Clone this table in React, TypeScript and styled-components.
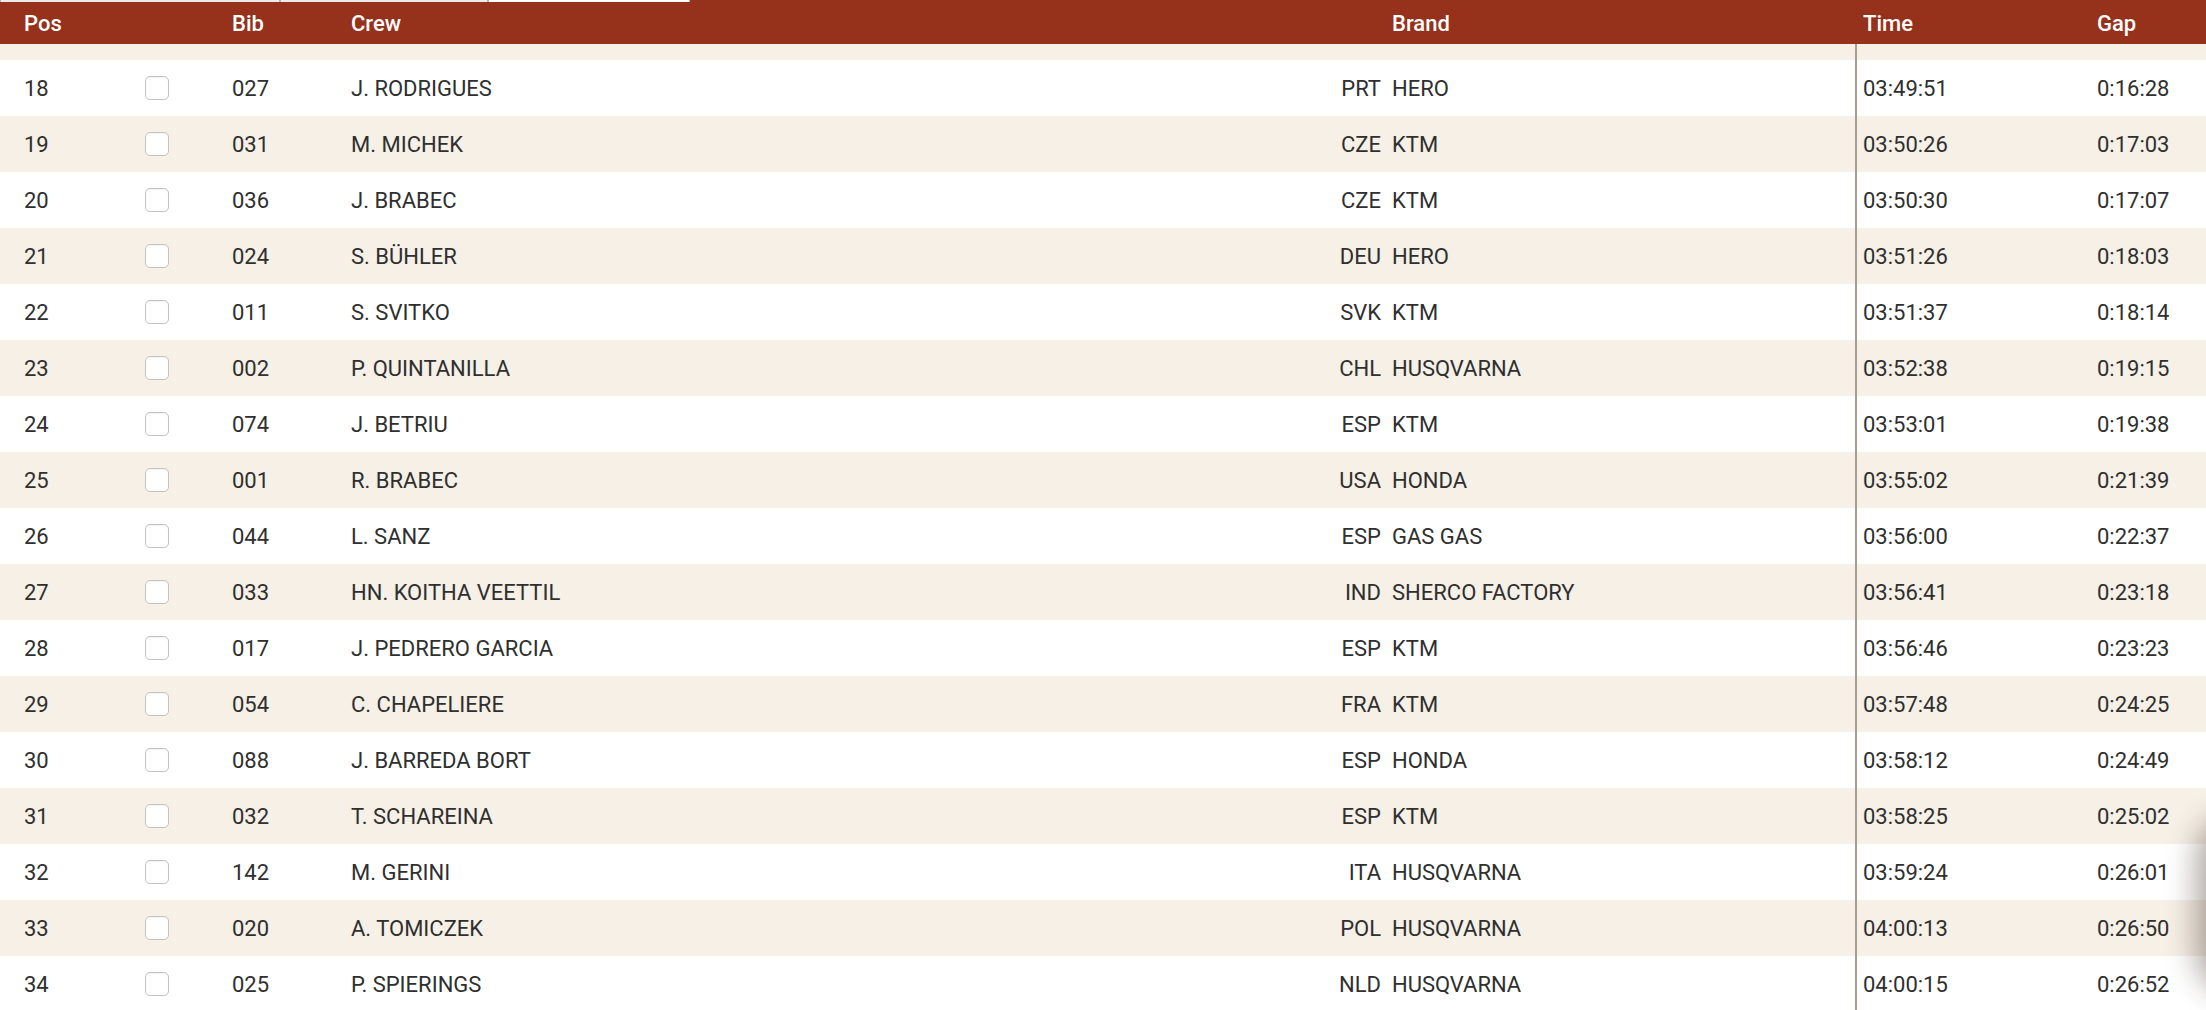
import React from "react";
import styled, { createGlobalStyle } from "styled-components";

type Rider = {
  pos: number;
  bib: string;
  crew: string;
  country: string;
  brand: string;
  time: string;
  gap: string;
};

const riders: Rider[] = [
  { pos: 18, bib: "027", crew: "J. RODRIGUES", country: "PRT", brand: "HERO", time: "03:49:51", gap: "0:16:28" },
  { pos: 19, bib: "031", crew: "M. MICHEK", country: "CZE", brand: "KTM", time: "03:50:26", gap: "0:17:03" },
  { pos: 20, bib: "036", crew: "J. BRABEC", country: "CZE", brand: "KTM", time: "03:50:30", gap: "0:17:07" },
  { pos: 21, bib: "024", crew: "S. BÜHLER", country: "DEU", brand: "HERO", time: "03:51:26", gap: "0:18:03" },
  { pos: 22, bib: "011", crew: "S. SVITKO", country: "SVK", brand: "KTM", time: "03:51:37", gap: "0:18:14" },
  { pos: 23, bib: "002", crew: "P. QUINTANILLA", country: "CHL", brand: "HUSQVARNA", time: "03:52:38", gap: "0:19:15" },
  { pos: 24, bib: "074", crew: "J. BETRIU", country: "ESP", brand: "KTM", time: "03:53:01", gap: "0:19:38" },
  { pos: 25, bib: "001", crew: "R. BRABEC", country: "USA", brand: "HONDA", time: "03:55:02", gap: "0:21:39" },
  { pos: 26, bib: "044", crew: "L. SANZ", country: "ESP", brand: "GAS GAS", time: "03:56:00", gap: "0:22:37" },
  { pos: 27, bib: "033", crew: "HN. KOITHA VEETTIL", country: "IND", brand: "SHERCO FACTORY", time: "03:56:41", gap: "0:23:18" },
  { pos: 28, bib: "017", crew: "J. PEDRERO GARCIA", country: "ESP", brand: "KTM", time: "03:56:46", gap: "0:23:23" },
  { pos: 29, bib: "054", crew: "C. CHAPELIERE", country: "FRA", brand: "KTM", time: "03:57:48", gap: "0:24:25" },
  { pos: 30, bib: "088", crew: "J. BARREDA BORT", country: "ESP", brand: "HONDA", time: "03:58:12", gap: "0:24:49" },
  { pos: 31, bib: "032", crew: "T. SCHAREINA", country: "ESP", brand: "KTM", time: "03:58:25", gap: "0:25:02" },
  { pos: 32, bib: "142", crew: "M. GERINI", country: "ITA", brand: "HUSQVARNA", time: "03:59:24", gap: "0:26:01" },
  { pos: 33, bib: "020", crew: "A. TOMICZEK", country: "POL", brand: "HUSQVARNA", time: "04:00:13", gap: "0:26:50" },
  { pos: 34, bib: "025", crew: "P. SPIERINGS", country: "NLD", brand: "HUSQVARNA", time: "04:00:15", gap: "0:26:52" },
];

const GlobalStyle = createGlobalStyle`
  html, body {
    margin: 0;
    padding: 0;
    background: #ffffff;
    overflow: hidden;
  }
  body {
    font-family: Roboto, "Liberation Sans", sans-serif;
  }
`;

const COLS = "145px 87px 119px 937px 104px 463px 242px 1fr";

const Page = styled.div`
  width: 2206px;
  height: 1010px;
  overflow: hidden;
  position: relative;
  background: #fff;
`;

const TabStrip = styled.div`
  display: flex;
  height: 2px;
  background: #96311c;
`;

const Tab = styled.div<{ w: number; light?: boolean }>`
  width: ${(p) => p.w}px;
  background: ${(p) => (p.light ? "#ffffff" : "#ecebea")};
  border-left: 1px solid #b9b4b0;
  border-right: 1px solid #b9b4b0;
  box-sizing: border-box;
`;

const HeaderRow = styled.div`
  display: grid;
  grid-template-columns: ${COLS};
  height: 42px;
  align-items: center;
  background: #96311c;
  color: #ffffff;
  font-size: 22px;
  font-weight: 500;
`;

const HeadCell = styled.div<{ pad?: number }>`
  padding-left: ${(p) => p.pad ?? 0}px;
`;

const Spacer = styled.div`
  display: grid;
  grid-template-columns: ${COLS};
  height: 16px;
  background: #f6f0e7;
`;

const Row = styled.div<{ alt: boolean }>`
  display: grid;
  grid-template-columns: ${COLS};
  height: 56px;
  align-items: stretch;
  background: ${(p) => (p.alt ? "#f6f0e7" : "#ffffff")};
  color: #2f2f2f;
  font-size: 22px;
`;

const Cell = styled.div<{ pad?: number; right?: boolean }>`
  display: flex;
  align-items: center;
  padding-left: ${(p) => p.pad ?? 0}px;
  justify-content: ${(p) => (p.right ? "flex-end" : "flex-start")};
  padding-right: ${(p) => (p.right ? 11 : 0)}px;
  white-space: nowrap;
`;

const TimeCell = styled(Cell)`
  border-left: 2px solid #a99d93;
  padding-left: 6px;
`;

const Divider = styled.div`
  grid-column: 7;
  border-left: 2px solid #a99d93;
`;

const Check = styled.span`
  width: 24px;
  height: 24px;
  box-sizing: border-box;
  border: 1px solid #c2c2c2;
  border-radius: 5px;
  background: #ffffff;
  box-shadow: inset 0 1px 1px rgba(0, 0, 0, 0.05);
`;

const EdgeShadow = styled.div`
  position: absolute;
  right: -64px;
  top: 825px;
  width: 64px;
  height: 160px;
  border-radius: 32px;
  background: #ffffff;
  box-shadow: 0 0 30px 10px rgba(60, 40, 30, 0.4);
`;

export default function App() {
  return (
    <Page>
      <GlobalStyle />
      <TabStrip>
        <Tab w={280} />
        <Tab w={208} />
        <Tab w={202} light />
      </TabStrip>
      <HeaderRow>
        <HeadCell pad={24}>Pos</HeadCell>
        <HeadCell />
        <HeadCell>Bib</HeadCell>
        <HeadCell>Crew</HeadCell>
        <HeadCell />
        <HeadCell>Brand</HeadCell>
        <HeadCell pad={8}>Time</HeadCell>
        <HeadCell>Gap</HeadCell>
      </HeaderRow>
      <Spacer>
        <Divider />
      </Spacer>
      {riders.map((r, i) => (
        <Row key={r.pos} alt={i % 2 === 1}>
          <Cell pad={24}>{r.pos}</Cell>
          <Cell>
            <Check />
          </Cell>
          <Cell>{r.bib}</Cell>
          <Cell>{r.crew}</Cell>
          <Cell right>{r.country}</Cell>
          <Cell>{r.brand}</Cell>
          <TimeCell>{r.time}</TimeCell>
          <Cell>{r.gap}</Cell>
        </Row>
      ))}
      <EdgeShadow />
    </Page>
  );
}
